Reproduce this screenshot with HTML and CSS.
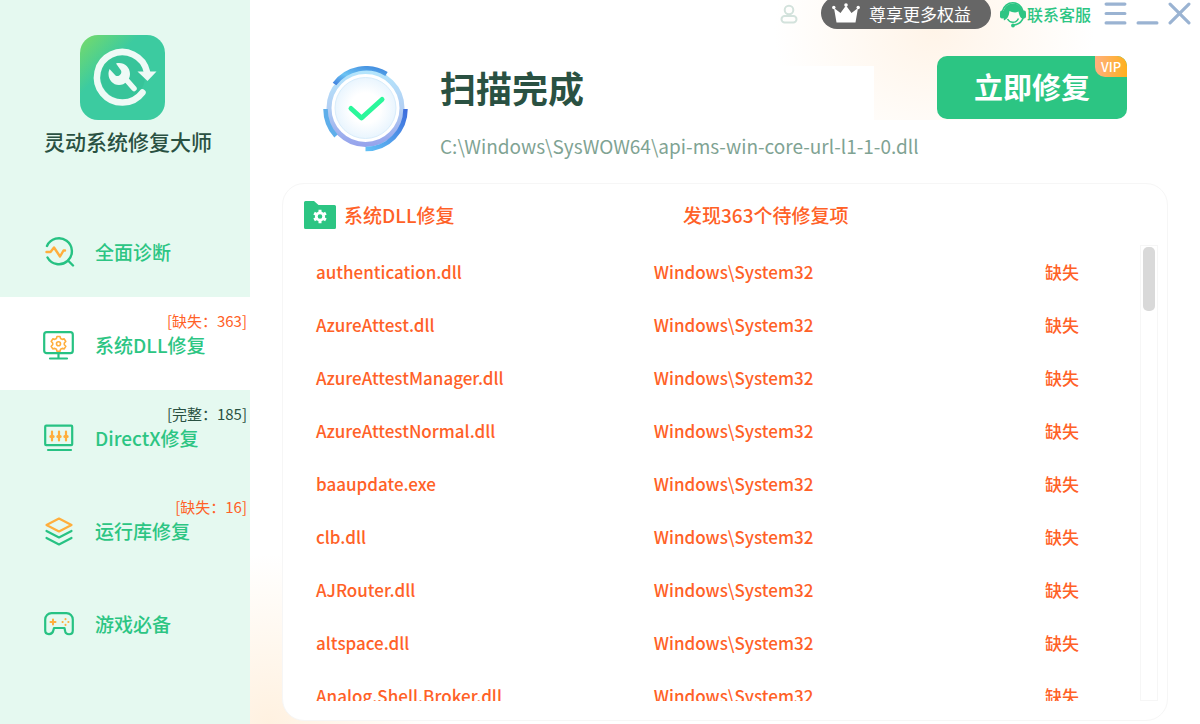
FILE: index.html
```html
<!DOCTYPE html>
<html lang="zh-CN">
<head>
  <meta charset="UTF-8">
  <meta name="viewport" content="width=device-width, initial-scale=1.0">
  <title>灵动系统修复大师</title>
  <link rel="stylesheet" href="styles.css">
</head>
<body>
  <div class="app">
    <aside class="sidebar">
      <div class="brand">
        <svg class="logo" viewBox="0 0 85 85">
          <defs>
            <linearGradient id="logoBg" x1="0" y1="0" x2="1" y2="1">
              <stop offset="0" stop-color="#78db68"/>
              <stop offset=".35" stop-color="#3ccba0"/>
              <stop offset="1" stop-color="#3ccba0"/>
            </linearGradient>
          </defs>
          <rect width="85" height="85" rx="18" fill="url(#logoBg)"/>
          <circle cx="43" cy="42" r="22" fill="#2fb88f" opacity=".35"/>
          <path d="M62.500 57.500A25.300 25.300 0 1 1 67 37" fill="none" stroke="#eefaf6" stroke-width="6.500" stroke-linecap="round"/>
          <path d="M57.500 36.500h19L67.500 46z" fill="#eefaf6"/>
          <path d="M43 41l11 12.500" stroke="#eefaf6" stroke-width="5.500" stroke-linecap="round"/>
          <path d="M36 28.500c7-2 14 3 14 10.500 0 6-5 11-11 11-6 0-10.500-5-10.500-11 0-2 .5-3.500 1-5l6 6.500c3 2 7-1.500 5.500-5z" fill="#eefaf6"/>
        </svg>
        <h1 class="brand-name">灵动系统修复大师</h1>
      </div>
      <nav class="menu">
        <a href="#" class="menu-item">
          <svg viewBox="0 0 32 32" fill="none" stroke="#27c283" stroke-width="2.400" stroke-linecap="round">
            <path d="M4 10A13 13 0 1 1 4.500 21.500M25 24.500l5 5"/>
            <path d="M3.500 16h4l3.500-4.500 6 9 3.500-6h1.500" stroke="#ffae3c" stroke-linejoin="round"/>
          </svg>
          <span>全面诊断</span>
        </a>
        <a href="#" class="menu-item active">
          <svg viewBox="0 0 32 32" fill="none" stroke="#27c283" stroke-width="2.200" stroke-linecap="round">
            <rect x="1.200" y="3.200" width="28.600" height="21" rx="2.500"/>
            <path d="M15.500 24.500v4.500M7 29.500h17"/>
            <path d="M14 7.500h3l.6 2 1.600.9 2-.5 1.600 2.600-1.500 1.500 0 1.800 1.500 1.500-1.600 2.600-2-.5-1.600.9-.6 2h-3l-.6-2-1.600-.9-2 .5-1.600-2.600 1.500-1.500v-1.800l-1.500-1.500 1.600-2.600 2 .5 1.600-.9z" stroke="#ffae3c" stroke-width="1.600" stroke-linejoin="round"/>
            <circle cx="15.500" cy="14.700" r="2" stroke="#ffae3c" stroke-width="1.600"/>
          </svg>
          <span>系统DLL修复</span>
          <em class="tag">[缺失：363]</em>
        </a>
        <a href="#" class="menu-item">
          <svg viewBox="0 0 32 32" fill="none" stroke="#27c283" stroke-width="2.200" stroke-linecap="round">
            <rect x="2.200" y="3.700" width="27" height="19.500" rx="1"/>
            <path d="M5 28h23"/>
            <path d="M9 9.500v9M16 9.500v9M23 9.500v9" stroke="#ffae3c"/>
            <path d="M7.800 14.500h2.400M14.800 14.500h2.400M21.800 14.500h2.400" stroke="#ffae3c" stroke-width="3"/>
          </svg>
          <span>DirectX修复</span>
          <em class="tag tag-ok">[完整：185]</em>
        </a>
        <a href="#" class="menu-item">
          <svg viewBox="0 0 32 32" fill="none" stroke="#27c283" stroke-width="2.200" stroke-linecap="round" stroke-linejoin="round">
            <path d="M16 3.500l12.500 6.500L16 16.500 3.500 10z" stroke="#ffae3c"/>
            <path d="M3.500 16L16 22.500 28.500 16M3.500 23L16 29.500 28.500 23"/>
          </svg>
          <span>运行库修复</span>
          <em class="tag">[缺失：16]</em>
        </a>
        <a href="#" class="menu-item">
          <svg viewBox="0 0 32 32" fill="none" stroke="#27c283" stroke-width="2.200" stroke-linecap="round" stroke-linejoin="round">
            <path d="M8.500 5.200h15c3.500 0 6.300 2.800 6.300 6.300v11c0 5-7.300 5-7.800 0l-.5-2.500h-10.500l-.7 2.500c-1 5-8.100 4.500-8.100 0v-11c0-3.500 2.800-6.300 6.300-6.300z"/>
            <path d="M10 11.500v5M7.500 14h5" stroke="#ffae3c" stroke-width="2"/>
            <path d="M22.500 11v.2M22.500 16.800v.2M19.500 14h.2M25.300 14h.2" stroke="#ffae3c" stroke-width="2"/>
          </svg>
          <span>游戏必备</span>
        </a>
      </nav>
    </aside>

    <main class="main">
      <header class="topbar">
        <button type="button" class="user" aria-label="用户">
          <svg width="18" height="20" viewBox="0 0 18 20" fill="none" stroke="#d3e2dc" stroke-width="2">
            <circle cx="9" cy="6" r="4.300"/>
            <rect x="1.500" y="12" width="15" height="6.500" rx="3.200"/>
          </svg>
        </button>
        <button type="button" class="vip-pill">
          <svg width="28" height="20" viewBox="0 0 28 20" fill="#fff">
            <path d="M2 5l6.500 5L14 2.500l5.500 7.500L26 5l-2.500 14.500h-19z"/>
            <circle cx="14" cy="2" r="1.800"/><circle cx="1.800" cy="4.500" r="1.700"/><circle cx="26.200" cy="4.500" r="1.700"/>
          </svg>
          尊享更多权益
        </button>
        <a href="#" class="service">
          <svg width="28" height="28" viewBox="0 0 28 28">
            <path d="M3.500 11A10.500 10.500 0 0 1 24 11M24.500 17c-1.500 5-5 7.500-10 8" fill="none" stroke="#2cc583" stroke-width="1.600"/>
            <path d="M5 20.500C2 10 7 3.500 14 3.500S25.500 9 23 18.500c-2-1-3-4-3.500-7-3 2-7 .5-9-.5-.5 5-2 8-5.500 9.500z" fill="#2cc583"/>
            <path d="M8.500 19c2.500 4.500 8.500 4.500 11-.5" fill="none" stroke="#2cc583" stroke-width="1.500"/>
            <rect x="1" y="10.500" width="4.500" height="8" rx="2" fill="#2cc583"/>
            <rect x="22.500" y="10.500" width="4.500" height="8" rx="2" fill="#2cc583"/>
            <circle cx="14" cy="25.500" r="1.900" fill="#2cc583"/>
          </svg>
          联系客服
        </a>
        <div class="window-btns">
          <button type="button" aria-label="菜单">
            <svg viewBox="0 0 22 22"><path d="M2 2h18M2 11h18M2 20h18"/></svg>
          </button>
          <button type="button" aria-label="最小化">
            <svg viewBox="0 0 22 22"><path d="M2 20h18"/></svg>
          </button>
          <button type="button" aria-label="关闭">
            <svg viewBox="0 0 22 22"><path d="M2 2l18 18M20 2L2 20"/></svg>
          </button>
        </div>
      </header>

      <section class="result">
        <svg class="result-icon" width="86" height="86" viewBox="0 0 86 86" fill="none">
          <defs>
            <linearGradient id="ring" x1="0" y1="0" x2="0" y2="1">
              <stop offset="0" stop-color="#b4e5fc"/>
              <stop offset=".5" stop-color="#b3cff3"/>
              <stop offset="1" stop-color="#96a4ec"/>
            </linearGradient>
            <linearGradient id="arcA" x1="0" y1="1" x2="1" y2="0">
              <stop offset="0" stop-color="#4283df"/>
              <stop offset=".4" stop-color="#6bc3f3"/>
              <stop offset="1" stop-color="#3f87dd"/>
            </linearGradient>
            <linearGradient id="arcB" x1="1" y1="0" x2="0" y2="1">
              <stop offset="0" stop-color="#3d6ddc"/>
              <stop offset="1" stop-color="#62c0f5"/>
            </linearGradient>
            <radialGradient id="disc">
              <stop offset=".5" stop-color="#fff"/>
              <stop offset="1" stop-color="#e9f5fe"/>
            </radialGradient>
          </defs>
          <circle cx="43.500" cy="42" r="36.500" stroke="url(#ring)" stroke-width="5"/>
          <circle cx="43.500" cy="42" r="30.500" fill="url(#disc)" stroke="#d9edfb"/>
          <path d="M12.500 18A39.500 39.500 0 0 1 64.500 8" stroke="url(#arcA)" stroke-width="4.500"/>
          <path d="M83.500 43A40 40 0 0 1 43.500 83" stroke="url(#arcB)" stroke-width="4.500"/>
          <path d="M3.500 43A40 40 0 0 0 14 70" stroke="#5eaeea" stroke-width="4.500"/>
          <path d="M29 42.500L39.500 52 60 33.500" stroke="#2bf79b" stroke-width="5" stroke-linecap="round" stroke-linejoin="round"/>
        </svg>
        <div class="result-info">
          <h2>扫描完成</h2>
          <p>C:\Windows\SysWOW64\api-ms-win-core-url-l1-1-0.dll</p>
        </div>
        <button type="button" class="fix-btn">立即修复<span class="vip">VIP</span></button>
      </section>

      <section class="card">
        <div class="card-head">
          <h3>
            <svg width="32" height="28" viewBox="0 0 32 28">
              <path d="M0 1.500Q0 0 1.500 0H10l4.500 4H30.500Q32 4 32 5.500V26.500Q32 28 30.500 28H1.500Q0 28 0 26.500z" fill="#2cc583"/>
              <circle cx="16" cy="15.500" r="3.700" fill="none" stroke="#fff" stroke-width="2.800"/>
              <path d="M16 8.700v2.500M16 19.800v2.500M10.100 12.100l2.200 1.300M19.700 17.600l2.200 1.300M10.100 18.900l2.200-1.300M19.700 13.400l2.200-1.300" stroke="#fff" stroke-width="3"/>
            </svg>
            系统DLL修复
          </h3>
          <span>发现363个待修复项</span>
        </div>
        <div class="card-body">
          <div class="list">
            <table>
              <tr><td>authentication.dll</td><td>Windows\System32</td><td>缺失</td></tr>
              <tr><td>AzureAttest.dll</td><td>Windows\System32</td><td>缺失</td></tr>
              <tr><td>AzureAttestManager.dll</td><td>Windows\System32</td><td>缺失</td></tr>
              <tr><td>AzureAttestNormal.dll</td><td>Windows\System32</td><td>缺失</td></tr>
              <tr><td>baaupdate.exe</td><td>Windows\System32</td><td>缺失</td></tr>
              <tr><td>clb.dll</td><td>Windows\System32</td><td>缺失</td></tr>
              <tr><td>AJRouter.dll</td><td>Windows\System32</td><td>缺失</td></tr>
              <tr><td>altspace.dll</td><td>Windows\System32</td><td>缺失</td></tr>
              <tr><td>Analog.Shell.Broker.dll</td><td>Windows\System32</td><td>缺失</td></tr>
            </table>
          </div>
          <div class="scrollbar"><div class="thumb"></div></div>
        </div>
      </section>
    </main>
  </div>
</body>
</html>
```
FILE: styles.css
```css
*{
  margin: 0;
  padding: 0;
  box-sizing: border-box;
}
body{
  font-family: "Noto Sans CJK SC", sans-serif;
  font-weight: 500;
  color: #2a5142;
  background: #fff;
}
a{
  text-decoration: none;
}
button{
  font: inherit;
  border: none;
  background: none;
  cursor: pointer;
}
svg{
  display: block;
  flex: none;
}
.app{
  display: flex;
  height: 100vh;
  overflow: hidden;
}

/* sidebar */
.sidebar{
  width: 250px;
  flex: none;
  background: #e5f9f0;
}
.brand{
  height: 204px;
  padding: 35px 0 0 44px;
}
.logo{
  width: 85px;
  height: 85px;
  margin-left: 36px;
}
.brand-name{
  margin-top: 5px;
  font-size: 21px;
  line-height: 32px;
  font-weight: 500;
}
.menu-item{
  position: relative;
  display: flex;
  align-items: center;
  gap: 20px;
  height: 93px;
  padding: 2px 0 0 43px;
  font-size: 19px;
  color: #2cc583;
}
.menu-item svg{
  width: 32px;
  height: 32px;
}
.menu-item.active{
  background: #fff;
}
.tag{
  position: absolute;
  top: 13px;
  right: 3px;
  font-size: 15px;
  line-height: 22px;
  font-style: normal;
  font-weight: 400;
  color: #ff6127;
}
.tag-ok{
  color: #2a5142;
}

/* main */
.main{
  flex: 1;
  min-width: 0;
  display: flex;
  flex-direction: column;
  padding: 0 32px 3px;
  background:
    radial-gradient(ellipse 160px 140px at 72% 30px, #fff4e8, transparent) 0 0 / 100% 120px no-repeat,
    radial-gradient(circle 170px at 2% 100%, #fff1e0, transparent) no-repeat,
    #fff;
}
.topbar{
  display: flex;
  justify-content: flex-end;
  align-items: flex-start;
  height: 30px;
  margin-right: -23px;
}
.user{
  padding-top: 4px;
  margin-right: 23px;
}
.vip-pill{
  display: flex;
  align-items: center;
  gap: 9px;
  height: 32px;
  margin: -3px 8px 0 0;
  padding: 0 20px 0 11px;
  border-radius: 16px;
  background: #666;
  color: #fff;
  font-size: 17px;
  font-weight: 400;
}
.service{
  display: flex;
  align-items: center;
  height: 27px;
  margin-right: 13px;
  font-size: 16px;
  color: #2cc583;
}
.window-btns{
  display: flex;
  gap: 9px;
  padding-top: 2px;
}
.window-btns svg{
  width: 23px;
  height: 23px;
  fill: none;
  stroke: #9ab3d2;
  stroke-width: 3;
  stroke-linecap: round;
}

/* scan result */
.result{
  display: flex;
  align-items: flex-start;
  height: 153px;
  padding: 26px 41px 0 40px;
}
.result-icon{
  margin-top: 10px;
}
.result-info{
  flex: 1;
  min-width: 0;
  margin: 10px 63px 0 32px;
}
.result-info h2{
  font-size: 36px;
  line-height: 42px;
  padding-bottom: 12px;
  font-weight: 700;
  background: #fff;
}
.result-info p{
  margin-top: 12px;
  font-size: 19px;
  line-height: 28px;
  font-weight: 400;
  color: #7fa393;
  white-space: nowrap;
}
.fix-btn{
  position: relative;
  flex: none;
  width: 190px;
  height: 63px;
  padding-bottom: 2px;
  border-radius: 10px;
  background: #2cc583;
  color: #fff;
  font-size: 29px;
  font-weight: 700;
  line-height: 61px;
  overflow: hidden;
}
.vip{
  position: absolute;
  top: 0;
  right: 0;
  width: 32px;
  font-size: 13px;
  line-height: 21px;
  font-weight: 500;
  border-radius: 0 0 0 10px;
  background: linear-gradient(90deg, #ffb080, #ffb01c);
}

/* list */
.card{
  flex: 1;
  min-height: 0;
  display: flex;
  flex-direction: column;
  padding: 0 9px 19px 21px;
  border: 1px solid #f6f6f6;
  border-radius: 22px;
  background: #fff;
  color: #ff6127;
}
.card-head{
  display: flex;
  align-items: center;
  height: 61px;
  font-size: 19px;
}
.card-head h3{
  display: flex;
  align-items: center;
  gap: 8px;
  width: 379px;
  font-size: 19px;
  font-weight: 500;
}
.card-body{
  flex: 1;
  min-height: 0;
  display: flex;
}
.list{
  flex: 1;
  padding-left: 12px;
  overflow: auto;
  scrollbar-width: none;
}
.list table{
  width: 100%;
  table-layout: fixed;
  border-collapse: collapse;
}
.list td{
  height: 53px;
  font-size: 17px;
}
.list td:nth-child(1){
  width: 41%;
}
.list td:nth-child(3){
  width: 95px;
}
.scrollbar{
  width: 18px;
  padding: 1px 2px;
  border: 1px solid #f6f6f6;
}
.thumb{
  width: 12px;
  height: 64px;
  border-radius: 5px;
  background: #d9d9d9;
}
```
